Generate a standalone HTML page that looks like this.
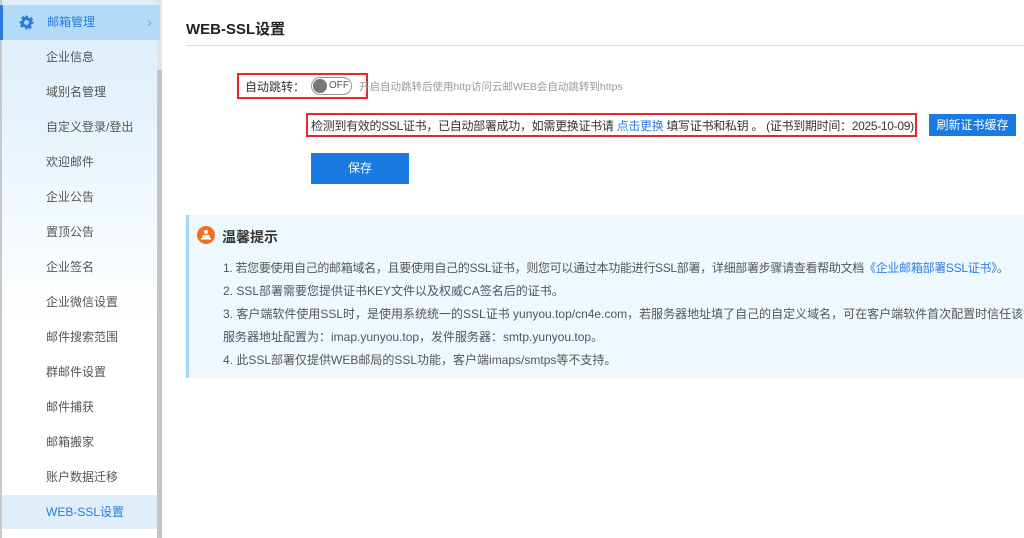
<!DOCTYPE html>
<html><head><meta charset="utf-8"><style>
*{margin:0;padding:0;box-sizing:border-box}
body{width:1024px;height:538px;overflow:hidden;background:#fff;font-family:"Liberation Sans","Noto Sans CJK SC",sans-serif;color:#333;position:relative}
.side{position:absolute;left:0;top:0;width:160px;height:538px;background:linear-gradient(180deg,#dcedf9 0%,#e8f4fc 25%,#f6fbfe 45%,#fff 60%);border-left:2px solid #c8c8c8}
.sb{position:absolute;left:155px;top:70px;width:5px;height:468px;background:#c4c4c4}
.sbt{position:absolute;left:155px;top:0;width:5px;height:538px;background:#e4e4e4}
.it{position:absolute;left:0;width:155px;height:34px;line-height:34px;padding-left:44px;font-size:12px;color:#555}
.top{left:-2px;width:160px;top:5px;height:35px;line-height:35px;background:#b3dbf8;color:#2a7ce0;border-left:3px solid #2a7ce0;padding-left:44px}
.act{background:#e0eefa;color:#2a7ce0}
.t{position:absolute;left:186px;top:18px;font-size:15px;font-weight:bold;color:#222}
.hr{position:absolute;left:186px;top:45px;right:0;height:1px;background:#ddd}
.red{position:absolute;border:2px solid #e8262b}
.tip{position:absolute;left:186px;top:215px;right:0;height:163px;background:#eff8fe;border-left:3px solid #a0d8f8}
.tl{position:absolute;left:223px;font-size:12px;color:#555}
</style></head><body>
<div class="side">
<div class="sbt"></div><div class="sb"></div>
<div class="it top"><svg style="position:absolute;left:16px;top:10px" width="15" height="15" viewBox="0 0 24 24"><path fill="#2a7ce0" d="M10 1h4l.7 3.2 2.2 1 2.8-1.8 2.8 2.8-1.8 2.8 1 2.2L23 10v4l-3.2.7-1 2.2 1.8 2.8-2.8 2.8-2.8-1.8-2.2 1L14 23h-4l-.7-3.2-2.2-1-2.8 1.8-2.8-2.8 1.8-2.8-1-2.2L1 14v-4l3.2-.7 1-2.2-1.8-2.8 2.8-2.8 2.8 1.8 2.2-1zM12 8a4 4 0 100 8 4 4 0 000-8z"/></svg>邮箱管理<span style="position:absolute;left:144px;top:0;color:#7aa;font-size:14px">›</span></div>
<div class="it" style="top:40px">企业信息</div>
<div class="it" style="top:75px">域别名管理</div>
<div class="it" style="top:110px">自定义登录/登出</div>
<div class="it" style="top:145px">欢迎邮件</div>
<div class="it" style="top:180px">企业公告</div>
<div class="it" style="top:215px">置顶公告</div>
<div class="it" style="top:250px">企业签名</div>
<div class="it" style="top:285px">企业微信设置</div>
<div class="it" style="top:320px">邮件搜索范围</div>
<div class="it" style="top:355px">群邮件设置</div>
<div class="it" style="top:390px">邮件捕获</div>
<div class="it" style="top:425px">邮箱搬家</div>
<div class="it" style="top:460px">账户数据迁移</div>
<div class="it act" style="top:495px">WEB-SSL设置</div>
</div>
<div class="t">WEB-SSL设置</div>
<div class="hr"></div>

<div class="red" style="left:237px;top:73px;width:131px;height:26px"></div>
<div style="position:absolute;left:245px;top:78px;font-size:12px;color:#333">自动跳转：</div>
<div style="position:absolute;left:311px;top:77px;width:41px;height:18px;border:1px solid #999;border-radius:9px;font-size:10px;line-height:16px;padding-left:17px;color:#555"><span style="position:absolute;left:1px;top:1px;width:14px;height:14px;border-radius:50%;background:#777"></span>OFF</div>
<div style="position:absolute;left:359px;top:79px;font-size:10.5px;color:#999">开启自动跳转后使用http访问云邮WEB会自动跳转到https</div>

<div class="red" style="left:306px;top:113px;width:611px;height:24px"></div>
<div style="position:absolute;left:311px;top:117px;font-size:12px;color:#333;white-space:nowrap;letter-spacing:-0.3px">检测到有效的SSL证书，已自动部署成功，如需更换证书请 <span style="color:#2a7ce0">点击更换</span> 填写证书和私钥 。 (证书到期时间：2025-10-09)</div>
<div style="position:absolute;left:929px;top:114px;width:87px;height:22px;background:#1a7ae2;color:#fff;font-size:12px;line-height:22px;text-align:center">刷新证书缓存</div>
<div style="position:absolute;left:311px;top:153px;width:98px;height:31px;background:#1a7ae2;color:#fff;font-size:12px;line-height:31px;text-align:center">保存</div>

<div class="tip"></div>
<svg style="position:absolute;left:197px;top:226px" width="18" height="18" viewBox="0 0 18 18"><circle cx="9" cy="9" r="9" fill="#f07020"/><circle cx="9" cy="6" r="2" fill="#fff"/><path d="M5 12h8l-1-3H6z" fill="#fff"/><rect x="4" y="12" width="10" height="1.5" fill="#fff"/></svg>
<div style="position:absolute;left:222px;top:227px;font-size:14px;font-weight:bold;color:#333">温馨提示</div>
<div class="tl" style="top:259px;white-space:nowrap;letter-spacing:-0.3px">1. 若您要使用自己的邮箱域名，且要使用自己的SSL证书，则您可以通过本功能进行SSL部署，详细部署步骤请查看帮助文档<span style="color:#2a7ce0">《企业邮箱部署SSL证书》</span>。</div>
<div class="tl" style="top:282px">2. SSL部署需要您提供证书KEY文件以及权威CA签名后的证书。</div>
<div class="tl" style="top:305px;white-space:nowrap">3. 客户端软件使用SSL时，是使用系统统一的SSL证书 yunyou.top/cn4e.com，若服务器地址填了自己的自定义域名，可在客户端软件首次配置时信任该证书</div>
<div class="tl" style="top:328px">服务器地址配置为：imap.yunyou.top，发件服务器：smtp.yunyou.top。</div>
<div class="tl" style="top:351px">4. 此SSL部署仅提供WEB邮局的SSL功能，客户端imaps/smtps等不支持。</div>
</body></html>
